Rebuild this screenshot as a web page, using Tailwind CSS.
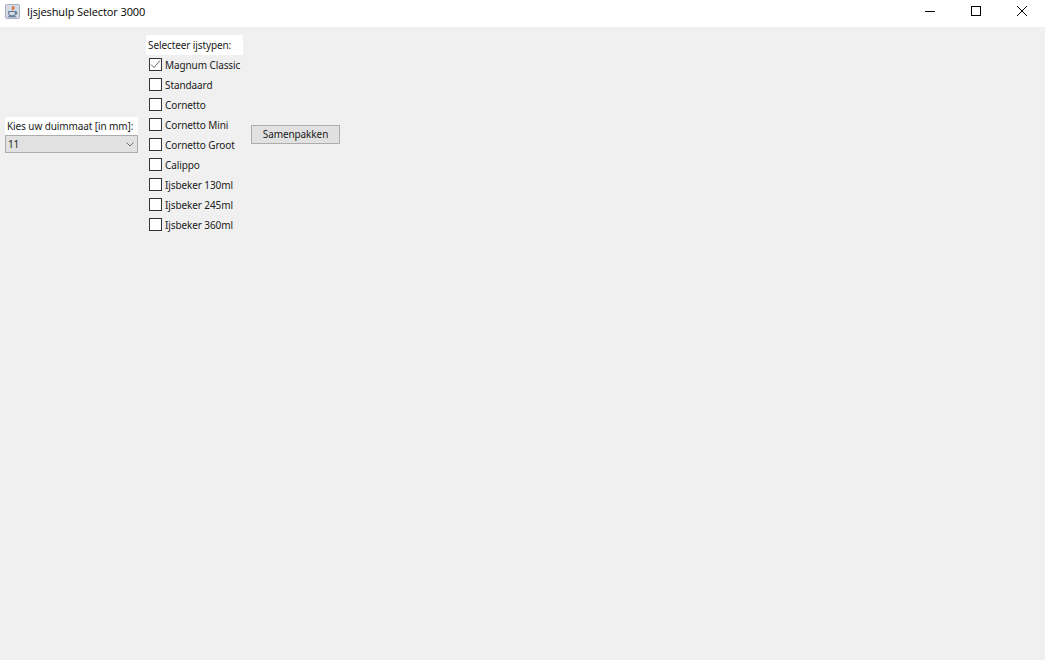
<!DOCTYPE html>
<html lang="en">
<head>
    <meta charset="UTF-8">
    <title>Ijsjeshulp Selector 3000</title>
    <script src="https://cdn.jsdelivr.net/npm/@tailwindcss/browser@4"></script>
</head>
<body class="bg-[#f0f0f0] h-[660px] w-[1045px] overflow-hidden font-['Noto_Sans',sans-serif] text-[10px] tracking-[-0.1px] text-[#1a1a1a]">

    <!-- Title bar -->
    <div class="h-[27px] pb-[5px] bg-white flex items-center">
        <svg class="ml-[5px] w-[15px] h-[15px]" viewBox="0 0 16 16">
            <rect x="0.5" y="0.5" width="15" height="15" rx="1.5" fill="#d5dbe5" stroke="#a3abb8"/>
            <path d="M8 2c1.500 1.500-1 2.500 0 4.500M9.500 3c.5 1-.5 2 0 3" fill="none" stroke="#d9651e" stroke-width="1.200"/>
            <path d="M4 8h7v2.500a2 2 0 0 1-2 2H6a2 2 0 0 1-2-2zM11 8.500h1.500v2H11M3 13.500h9" fill="none" stroke="#5b7696" stroke-width="1.100"/>
        </svg>
        <span class="ml-[7px] mt-[2px] font-['Open_Sans',sans-serif] text-[11px] text-black">Ijsjeshulp Selector 3000</span>
        <div class="ml-auto flex items-center">
            <div class="w-[46px] h-[22px] flex items-center justify-center">
                <svg class="w-[10px] h-[10px]" viewBox="0 0 10 10"><path d="M0 5.500h10" stroke="#000" stroke-width="1"/></svg>
            </div>
            <div class="w-[46px] h-[22px] flex items-center justify-center">
                <svg class="w-[10px] h-[10px]" viewBox="0 0 10 10"><rect x="0.500" y="0.500" width="9" height="9" fill="none" stroke="#000"/></svg>
            </div>
            <div class="w-[46px] h-[22px] flex items-center justify-center">
                <svg class="w-[10px] h-[10px]" viewBox="0 0 10 10"><path d="M0 0l10 10M10 0L0 10" stroke="#000" stroke-width="1"/></svg>
            </div>
        </div>
    </div>

    <!-- Form -->
    <div class="flex items-center gap-[8px] pl-[5px] pt-[8px]">

        <!-- Thumb size -->
        <div class="w-[133px]">
            <div class="h-[18px] bg-white pl-[2px] flex items-center whitespace-nowrap">Kies uw duimmaat [in mm]:</div>
            <div class="h-[18px] bg-[#e1e1e1] border border-[#adadad] pl-[2px] pr-[3px] flex items-center justify-between">
                <span>11</span>
                <svg class="w-[8px] h-[5px]" viewBox="0 0 8 5"><path d="M0.500 0.500L4 4l3.500-3.500" fill="none" stroke="#707070"/></svg>
            </div>
        </div>

        <!-- Ice cream types -->
        <div class="w-[97px]">
            <div class="h-[20px] bg-white pl-[2px] flex items-center">Selecteer ijstypen:</div>
            <label class="h-[20px] pl-[3px] flex items-center gap-[3px] whitespace-nowrap">
                <span class="w-[13px] h-[13px] mb-[2px] bg-white border border-[#333333] flex items-center justify-center">
                    <svg class="w-[11px] h-[11px]" viewBox="0 0 11 11"><path d="M1 5.500l3 3 6-7" fill="none" stroke="#666666" stroke-width="1"/></svg>
                </span>
                Magnum Classic
            </label>
            <label class="h-[20px] pl-[3px] flex items-center gap-[3px] whitespace-nowrap"><span class="w-[13px] h-[13px] mb-[2px] bg-white border border-[#333333]"></span>Standaard</label>
            <label class="h-[20px] pl-[3px] flex items-center gap-[3px] whitespace-nowrap"><span class="w-[13px] h-[13px] mb-[2px] bg-white border border-[#333333]"></span>Cornetto</label>
            <label class="h-[20px] pl-[3px] flex items-center gap-[3px] whitespace-nowrap"><span class="w-[13px] h-[13px] mb-[2px] bg-white border border-[#333333]"></span>Cornetto Mini</label>
            <label class="h-[20px] pl-[3px] flex items-center gap-[3px] whitespace-nowrap"><span class="w-[13px] h-[13px] mb-[2px] bg-white border border-[#333333]"></span>Cornetto Groot</label>
            <label class="h-[20px] pl-[3px] flex items-center gap-[3px] whitespace-nowrap"><span class="w-[13px] h-[13px] mb-[2px] bg-white border border-[#333333]"></span>Calippo</label>
            <label class="h-[20px] pl-[3px] flex items-center gap-[3px] whitespace-nowrap"><span class="w-[13px] h-[13px] mb-[2px] bg-white border border-[#333333]"></span>Ijsbeker 130ml</label>
            <label class="h-[20px] pl-[3px] flex items-center gap-[3px] whitespace-nowrap"><span class="w-[13px] h-[13px] mb-[2px] bg-white border border-[#333333]"></span>Ijsbeker 245ml</label>
            <label class="h-[20px] pl-[3px] flex items-center gap-[3px] whitespace-nowrap"><span class="w-[13px] h-[13px] mb-[2px] bg-white border border-[#333333]"></span>Ijsbeker 360ml</label>
        </div>

        <!-- Submit -->
        <button class="w-[89px] h-[19px] mb-[2px] bg-[#e1e1e1] border border-[#adadad] flex items-center justify-center">Samenpakken</button>
    </div>

</body>
</html>
